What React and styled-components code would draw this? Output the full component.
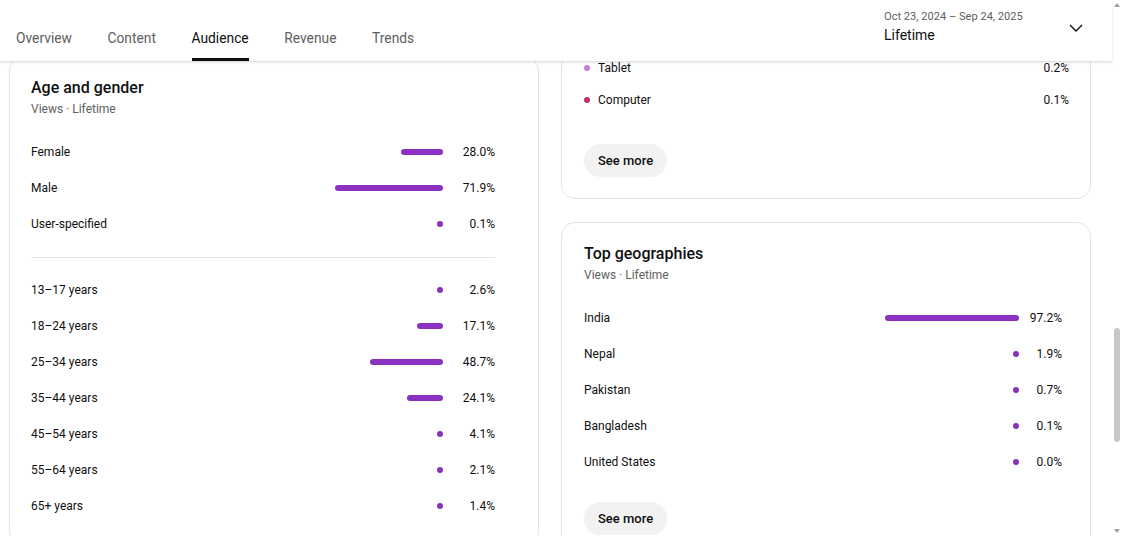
import styled, { createGlobalStyle } from "styled-components";

const GlobalStyle = createGlobalStyle`
  html, body { margin: 0; padding: 0; background: #fff; }
  body { font-family: Roboto, "Noto Sans", Arial, sans-serif; color: #0f0f0f; }
`;

const Screen = styled.div`
  width: 1122px;
  height: 536px;
  display: flex;
  overflow: hidden;
  background: #fff;
`;

const Viewport = styled.div`
  flex: 1;
  min-width: 0;
  display: flex;
  flex-direction: column;
`;

const Header = styled.header`
  position: relative;
  z-index: 2;
  height: 61px;
  flex-shrink: 0;
  box-sizing: border-box;
  padding: 0 29px 0 16px;
  display: flex;
  justify-content: space-between;
  background: #fff;
  box-shadow: 0 1px 2px rgba(0, 0, 0, 0.1), 0 2px 4px rgba(0, 0, 0, 0.06);
`;

const Tabs = styled.nav`
  display: flex;
  gap: 35.6px;
`;

const Tab = styled.div`
  box-sizing: border-box;
  height: 61px;
  padding-top: 28px;
  font-size: 13.8px;
  line-height: 20px;
  color: ${(p) => (p.$active ? "#0f0f0f" : "#606060")};
  border-bottom: 3px solid ${(p) => (p.$active ? "#0f0f0f" : "transparent")};
`;

const Range = styled.div`
  display: flex;
  align-items: flex-start;
`;

const RangeText = styled.div`
  width: 185px;
  padding-top: 9px;
  display: flex;
  flex-direction: column;
`;

const RangeDates = styled.span`
  font-size: 11.1px;
  line-height: 16px;
  color: #606060;
`;

const RangeLabel = styled.span`
  font-size: 14px;
  line-height: 20px;
  color: #0f0f0f;
`;

const ChevronBox = styled.div`
  padding-top: 24px;
  display: flex;
`;

const Body = styled.main`
  flex: 1;
  overflow: hidden;
  display: flex;
  align-items: flex-start;
  gap: 22px;
  padding-left: 9px;
`;

const Column = styled.div`
  width: 530px;
  display: flex;
  flex-direction: column;
  gap: 23px;
  margin-top: ${(p) => p.$offset || 0}px;
`;

const Card = styled.section`
  box-sizing: border-box;
  border: 1px solid #e3e3e3;
  border-radius: 14px;
  background: #fff;
  padding: ${(p) => p.$pad};
`;

const Title = styled.h2`
  margin: 0;
  font-size: 16px;
  font-weight: 500;
  line-height: 24px;
`;

const Sub = styled.div`
  margin-top: 1px;
  font-size: 12px;
  line-height: 16px;
  color: #606060;
`;

const List = styled.div`
  margin-top: ${(p) => p.$top ?? 17}px;
  display: flex;
  flex-direction: column;
`;

const Row = styled.div`
  height: ${(p) => p.$h || 36}px;
  display: flex;
  align-items: center;
  font-size: 12px;
  color: #0f0f0f;
`;

const Label = styled.span`
  flex: 1;
`;

const Bar = styled.span`
  height: 6px;
  min-width: 6px;
  border-radius: 3px;
  background: #8b31c1;
`;

const Pct = styled.span`
  width: ${(p) => p.$w}px;
  text-align: right;
`;

const Dot = styled.span`
  width: 6px;
  height: 6px;
  border-radius: 50%;
  margin-right: 8px;
  background: ${(p) => p.$color};
`;

const Divider = styled.hr`
  border: 0;
  border-top: 1px solid #e5e5e5;
  margin: 15px 0 14px;
`;

const SeeMore = styled.button`
  margin-top: ${(p) => p.$top}px;
  align-self: flex-start;
  height: 33px;
  padding: 0 14px;
  border: 0;
  border-radius: 17px;
  background: #f2f2f2;
  font-family: Roboto, "Noto Sans", Arial, sans-serif;
  font-size: 13px;
  font-weight: 500;
  color: #0f0f0f;
`;

const CardInner = styled.div`
  display: flex;
  flex-direction: column;
`;

const Scrollbar = styled.div`
  width: 10px;
  flex-shrink: 0;
  display: flex;
  flex-direction: column;
  align-items: center;
  background: #fff;
`;

const Arrow = styled.div`
  height: 10px;
  display: flex;
  align-items: center;
  justify-content: center;
`;

const Track = styled.div`
  flex: 1;
`;

const Thumb = styled.div`
  width: 6px;
  height: 114px;
  margin-top: 318px;
  border-radius: 3px;
  background: #c8c8c8;
`;

const gender = [
  ["Female", 28.0],
  ["Male", 71.9],
  ["User-specified", 0.1],
];

const ages = [
  ["13–17 years", 2.6],
  ["18–24 years", 17.1],
  ["25–34 years", 48.7],
  ["35–44 years", 24.1],
  ["45–54 years", 4.1],
  ["55–64 years", 2.1],
  ["65+ years", 1.4],
];

const geos = [
  ["India", 97.2],
  ["Nepal", 1.9],
  ["Pakistan", 0.7],
  ["Bangladesh", 0.1],
  ["United States", 0.0],
];

const devices = [
  ["Tablet", "0.2%", "#c07ee6"],
  ["Computer", "0.1%", "#c22c6f"],
];

function BarRow({ label, value, scale, pctW }) {
  return (
    <Row>
      <Label>{label}</Label>
      <Bar style={{ width: Math.max(6, value * scale) }} />
      <Pct $w={pctW}>{value.toFixed(1)}%</Pct>
    </Row>
  );
}

function Chevron() {
  return (
    <svg width="14" height="8" viewBox="0 0 14 8">
      <polyline points="1,1 7,7 13,1" fill="none" stroke="#0f0f0f" strokeWidth="1.4" />
    </svg>
  );
}

export default function App() {
  return (
    <Screen>
      <GlobalStyle />
      <Viewport>
        <Header>
          <Tabs>
            <Tab>Overview</Tab>
            <Tab>Content</Tab>
            <Tab $active>Audience</Tab>
            <Tab>Revenue</Tab>
            <Tab>Trends</Tab>
          </Tabs>
          <Range>
            <RangeText>
              <RangeDates>Oct 23, 2024 – Sep 24, 2025</RangeDates>
              <RangeLabel>Lifetime</RangeLabel>
            </RangeText>
            <ChevronBox>
              <Chevron />
            </ChevronBox>
          </Range>
        </Header>
        <Body>
          <Column $offset={-4}>
            <Card $pad="18px 43px 20px 21px">
              <Title>Age and gender</Title>
              <Sub>Views · Lifetime</Sub>
              <List>
                {gender.map(([l, v]) => (
                  <BarRow key={l} label={l} value={v} scale={1.5} pctW={52} />
                ))}
              </List>
              <Divider />
              <List $top={0}>
                {ages.map(([l, v]) => (
                  <BarRow key={l} label={l} value={v} scale={1.5} pctW={52} />
                ))}
              </List>
            </Card>
          </Column>
          <Column $offset={-10}>
            <Card $pad="0 21px 21px 22px">
              <CardInner>
                <List $top={0}>
                  {devices.map(([l, v, c]) => (
                    <Row key={l} $h={32}>
                      <Dot $color={c} />
                      <Label>{l}</Label>
                      <span>{v}</span>
                    </Row>
                  ))}
                </List>
                <SeeMore $top={28}>See more</SeeMore>
              </CardInner>
            </Card>
            <Card $pad="19px 28px 20px 22px">
              <CardInner>
                <Title>Top geographies</Title>
                <Sub>Views · Lifetime</Sub>
                <List>
                  {geos.map(([l, v]) => (
                    <BarRow key={l} label={l} value={v} scale={1.38} pctW={43} />
                  ))}
                </List>
                <SeeMore $top={22}>See more</SeeMore>
              </CardInner>
            </Card>
          </Column>
        </Body>
      </Viewport>
      <Scrollbar>
        <Arrow>
          <svg width="6" height="4" viewBox="0 0 6 4"><polygon points="0,4 3,0 6,4" fill="#a0a0a0" /></svg>
        </Arrow>
        <Track>
          <Thumb />
        </Track>
        <Arrow>
          <svg width="6" height="4" viewBox="0 0 6 4"><polygon points="0,0 3,4 6,0" fill="#a0a0a0" /></svg>
        </Arrow>
      </Scrollbar>
    </Screen>
  );
}
